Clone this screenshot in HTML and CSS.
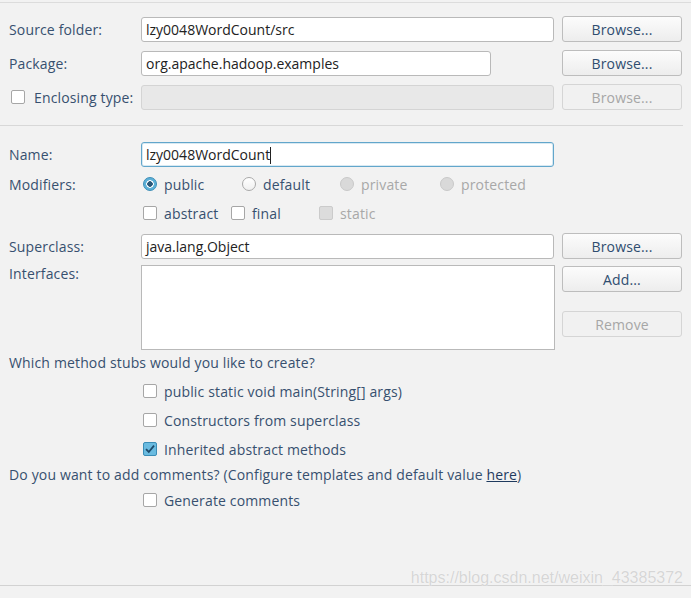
FILE: index.html
```html
<!DOCTYPE html>
<html lang="en">
<head>
    <meta charset="UTF-8">
    <title>New Java Class</title>
    <link rel="stylesheet" href="styles.css">
</head>
<body>
    <div class="dialog">
        <div class="row row-first">
            <span class="label">Source folder:</span>
            <div class="field">lzy0048WordCount/src</div>
            <button class="btn">Browse...</button>
        </div>
        <div class="row">
            <span class="label">Package:</span>
            <div class="field field-short">org.apache.hadoop.examples</div>
            <button class="btn">Browse...</button>
        </div>
        <div class="row">
            <span class="label label-check"><span class="box"></span>Enclosing type:</span>
            <div class="field disabled"></div>
            <button class="btn" disabled>Browse...</button>
        </div>

        <div class="separator"></div>

        <div class="row row-name">
            <span class="label">Name:</span>
            <div class="field focused">lzy0048WordCount<span class="caret"></span></div>
        </div>
        <div class="row row-opt row-mod">
            <span class="label">Modifiers:</span>
            <div class="options">
                <span class="opt opt-public"><span class="radio checked"></span>public</span>
                <span class="opt opt-default"><span class="radio"></span>default</span>
                <span class="opt opt-private off"><span class="radio"></span>private</span>
                <span class="opt off"><span class="radio"></span>protected</span>
            </div>
        </div>
        <div class="row row-opt row-mod2">
            <span class="label"></span>
            <div class="options">
                <span class="opt opt-abstract"><span class="box"></span>abstract</span>
                <span class="opt opt-final"><span class="box"></span>final</span>
                <span class="opt off"><span class="box"></span>static</span>
            </div>
        </div>
        <div class="row row-super">
            <span class="label">Superclass:</span>
            <div class="field">java.lang.Object</div>
            <button class="btn">Browse...</button>
        </div>
        <div class="row row-iface">
            <span class="label label-top">Interfaces:</span>
            <div class="list"></div>
            <div class="side-buttons">
                <button class="btn">Add...</button>
                <button class="btn" disabled>Remove</button>
            </div>
        </div>

        <p class="question q-stubs">Which method stubs would you like to create?</p>
        <div class="check-line cl-first"><span class="box"></span>public static void main(String[] args)</div>
        <div class="check-line"><span class="box"></span>Constructors from superclass</div>
        <div class="check-line"><span class="box checked">
            <svg width="14" height="14" viewBox="0 0 14 14"><path d="M3 7.2 L5.8 10 L11 3.6" fill="none" stroke="#1d4a6b" stroke-width="1.8"/></svg>
        </span>Inherited abstract methods</div>

        <p class="question q-comments">Do you want to add comments? (Configure templates and default value <span class="link">here</span>)</p>
        <div class="check-line cl-gen"><span class="box"></span>Generate comments</div>

        <div class="watermark">https://blog.csdn.net/weixin_43385372</div>
    </div>
</body>
</html>
```

FILE: styles.css
```css
* {
    box-sizing: border-box;
}

body {
    margin: 0;
    background: #f2f2f2;
    font-family: 'Open Sans', 'Noto Sans', sans-serif;
    font-size: 14px;
    letter-spacing: 0.15px;
    color: #37506f;
}

.dialog {
    position: relative;
    height: 584px;
    border-top: 1px solid #dcdcdc;
    margin-top: 2px;
    border-bottom: 1px solid #d2d2d2;
    padding: 0 9px;
}

.row {
    display: grid;
    grid-template-columns: 124px 413px 120px;
    column-gap: 8px;
    align-items: center;
    height: 26px;
    margin-top: 8px;
}

.row-first {
    margin-top: 13px;
}

.label {
    white-space: nowrap;
    display: flex;
    align-items: center;
}

.label-check .box {
    margin: 0 9px 0 2px;
}

.label-top {
    align-self: start;
    margin-top: -1px;
}

.field {
    height: 25px;
    background: white;
    border: 1px solid #b9b9b9;
    border-radius: 3px;
    padding: 0 4px;
    line-height: 23px;
    color: #222;
    white-space: nowrap;
    letter-spacing: 0;
}

.field-short {
    width: 350px;
}

.field.disabled {
    background: #e8e8e8;
    border-color: #d4d4d4;
}

.field.focused {
    border-color: #62a6cb;
    box-shadow: inset 0 0 0 1px rgba(98, 166, 203, 0.25);
}

.caret {
    display: inline-block;
    width: 1px;
    height: 17px;
    background: #222;
    vertical-align: -4px;
}

.btn {
    height: 26px;
    font-family: inherit;
    font-size: 14px;
    letter-spacing: 0.15px;
    color: #2f4d70;
    background: linear-gradient(#fcfcfc, #ededed);
    border: 1px solid #bdbdbd;
    border-radius: 3px;
    padding: 0;
}

.btn:disabled {
    color: #a6a6a6;
    background: #f1f1f1;
    border-color: #d5d5d5;
}

.separator {
    height: 1px;
    background: #d8d8d8;
    margin: 15px 0 0 -9px;
    width: 683px;
}

.row-name {
    margin-top: 16px;
    height: 25px;
}

.row-opt {
    height: 20px;
}

.row-mod {
    margin-top: 7px;
}

.row-mod2 {
    margin-top: 9px;
}

.options {
    display: flex;
    padding-left: 2px;
}

.opt {
    display: flex;
    align-items: center;
    white-space: nowrap;
}

.opt .radio,
.opt .box {
    margin-right: 7px;
}

.opt-public { width: 99px; }
.opt-default { width: 98px; }
.opt-private { width: 100px; }
.opt-abstract { width: 88px; }
.opt-final { width: 88px; }

.off {
    color: #a8a8a8;
}

.radio {
    width: 14px;
    height: 14px;
    border-radius: 50%;
    border: 1px solid #a9a9a9;
    background: linear-gradient(#ffffff, #f0f0f0);
    flex: none;
}

.radio.checked {
    border-color: #3b8db6;
    background: radial-gradient(circle, #2b5878 0 2.5px, #ffffff 3px 3.5px, #5db1d8 4px);
}

.off .radio {
    border-color: #c9c9c9;
    background: #d9d9d9;
}

.box {
    width: 14px;
    height: 14px;
    border: 1px solid #a6a6a6;
    border-radius: 2px;
    background: white;
    flex: none;
    display: inline-block;
}

.box svg {
    display: block;
    margin: -1px;
}

.box.checked {
    border-color: #3b8db6;
    background: #6abbe0;
}

.off .box {
    background: #dcdcdc;
    border-color: #cbcbcb;
}

.row-super {
    margin-top: 10px;
}

.row-iface {
    height: 85px;
    margin-top: 6px;
    align-items: start;
}

.list {
    height: 85px;
    width: 414px;
    background: white;
    border: 1px solid #b9b9b9;
}

.side-buttons {
    display: flex;
    flex-direction: column;
    gap: 19px;
    padding-top: 1px;
}

.question {
    margin: 3px 0 0;
    height: 20px;
    line-height: 20px;
    white-space: nowrap;
}

.check-line {
    display: flex;
    align-items: center;
    height: 20px;
    margin: 9px 0 0 134px;
    white-space: nowrap;
}

.check-line .box {
    margin-right: 7px;
}

.cl-first {
    margin-top: 8px;
}

.q-comments {
    margin-top: 6px;
}

.cl-gen {
    margin-top: 5px;
}

.link {
    color: #1f3a5e;
    text-decoration: underline;
}

.watermark {
    position: absolute;
    right: 8px;
    bottom: -2px;
    font-family: 'Liberation Sans', sans-serif;
    font-size: 16px;
    letter-spacing: 0;
    color: #d6d6d6;
    text-shadow: 0 0 1px #ffffff;
}
```
